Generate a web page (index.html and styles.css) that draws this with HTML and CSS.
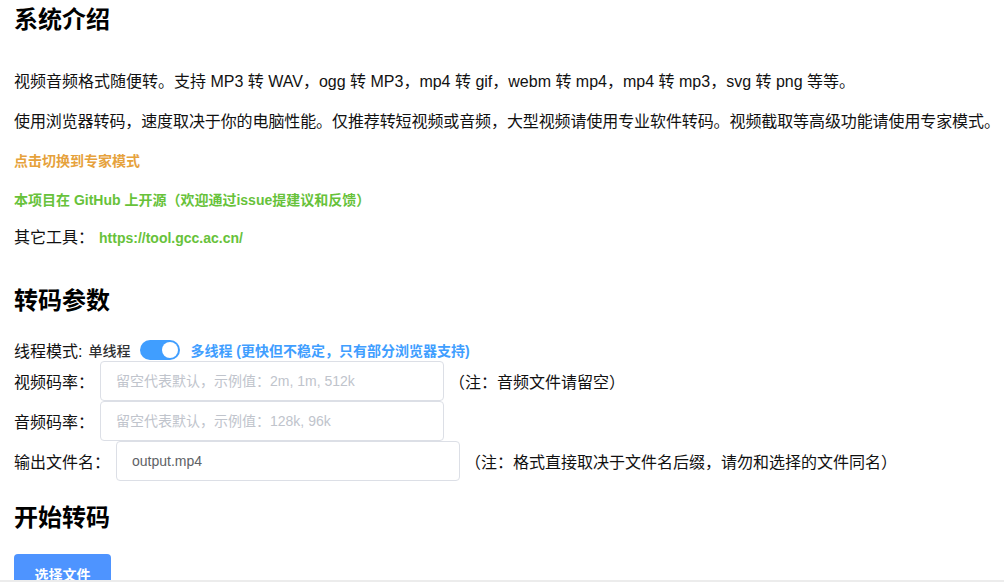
FILE: index.html
```html
<!DOCTYPE html>
<html lang="zh-CN">
<head>
<meta charset="utf-8">
<title>视频音频格式转换</title>
<link rel="stylesheet" href="styles.css">
</head>
<body>
<main class="page">
  <h2 class="title t1">系统介绍</h2>
  <p class="text p1">视频音频格式随便转。支持 MP3 转 WAV，ogg 转 MP3，mp4 转 gif，webm 转 mp4，mp4 转 mp3，svg 转 png 等等。</p>
  <p class="text p2">使用浏览器转码，速度取决于你的电脑性能。仅推荐转短视频或音频，大型视频请使用专业软件转码。视频截取等高级功能请使用专家模式。</p>
  <p class="link warn">点击切换到专家模式</p>
  <p class="link ok">本项目在 GitHub 上开源（欢迎通过issue提建议和反馈）</p>
  <p class="text tools">其它工具：<span class="link-inline">https://tool.gcc.ac.cn/</span></p>

  <h2 class="title t2">转码参数</h2>
  <div class="row switch-row">
    <span class="label">线程模式:</span>
    <span class="sw-label">单线程</span>
    <span class="switch"><span class="dot"></span></span>
    <span class="sw-label active">多线程 (更快但不稳定，只有部分浏览器支持)</span>
  </div>
  <div class="row field">
    <span class="label">视频码率：</span>
    <input class="input" type="text" placeholder="留空代表默认，示例值：2m, 1m, 512k">
    <span class="note">（注：音频文件请留空）</span>
  </div>
  <div class="row field">
    <span class="label">音频码率：</span>
    <input class="input" type="text" placeholder="留空代表默认，示例值：128k, 96k">
  </div>
  <div class="row field">
    <span class="label">输出文件名：</span>
    <input class="input" type="text" value="output.mp4">
    <span class="note">（注：格式直接取决于文件名后缀，请勿和选择的文件同名）</span>
  </div>

  <h2 class="title t3">开始转码</h2>
  <button class="btn" type="button">选择文件</button>
</main>
<div class="bottom-edge"></div>
</body>
</html>
```

FILE: styles.css
```css
html, body {
  margin: 0;
  padding: 0;
  background: #fff;
}
body {
  font-family: "Liberation Sans", "Noto Sans CJK SC", sans-serif;
  color: #111;
  font-size: 16px;
  overflow: hidden;
}
.page {
  padding: 0 0 0 14px;
  display: flex;
  flex-direction: column;
  align-items: flex-start;
}
.title {
  margin: 0;
  font-size: 24px;
  font-weight: bold;
  line-height: 32px;
  color: #000;
}
.t1 { margin-top: 4px; }
.t2 { margin-top: 35px; }
.t3 { margin-top: 21px; }
.text {
  margin: 0;
  font-size: 16px;
  line-height: 24px;
  white-space: nowrap;
}
.p1 { margin-top: 34px; }
.p2 { margin-top: 16px; letter-spacing: -0.1px; }
.link {
  margin: 15px 0 0;
  font-size: 14px;
  font-weight: bold;
  line-height: 24px;
}
.warn { color: #E6A23C; }
.ok { color: #67C23A; }
.tools { margin-top: 14px; }
.link-inline {
  color: #67C23A;
  font-size: 14px;
  font-weight: bold;
  margin-left: 5px;
}
.row {
  display: flex;
  align-items: center;
}
.switch-row {
  margin-top: 22px;
  height: 22px;
}
.switch-row .label { margin-right: 6px; }
.sw-label {
  font-size: 14px;
  font-weight: 500;
  color: #303133;
}
.sw-label.active {
  color: #409EFF;
  font-weight: bold;
}
.switch {
  width: 40px;
  height: 20px;
  border-radius: 10px;
  background: #409EFF;
  margin: 0 10px;
  display: flex;
  align-items: center;
  justify-content: flex-end;
  padding: 0 2px;
  box-sizing: border-box;
}
.dot {
  width: 16px;
  height: 16px;
  border-radius: 50%;
  background: #fff;
}
.field {
  height: 40px;
}
.label {
  font-size: 16px;
  color: #111;
  white-space: nowrap;
}
.field .label { margin-right: 6px; }
.input {
  width: 344px;
  height: 40px;
  box-sizing: border-box;
  border: 1px solid #DCDFE6;
  border-radius: 4px;
  padding: 0 15px;
  font-family: "Liberation Sans", "Noto Sans CJK SC", sans-serif;
  font-size: 14px;
  color: #606266;
  outline: none;
  background: #fff;
}
.input::placeholder { color: #C0C4CC; }
.note {
  margin-left: 5px;
  font-size: 16px;
  color: #111;
}
.btn {
  margin-top: 20px;
  width: 97px;
  height: 40px;
  border: none;
  border-radius: 4px;
  background: #4E94FF;
  color: #fff;
  font-family: "Liberation Sans", "Noto Sans CJK SC", sans-serif;
  font-size: 14px;
  font-weight: bold;
  padding: 0;
}
.bottom-edge {
  position: fixed;
  left: 0;
  right: 0;
  bottom: 0;
  height: 2px;
  background: #ececec;
}
```
